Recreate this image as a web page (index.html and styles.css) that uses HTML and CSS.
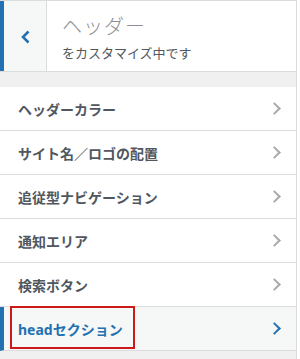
FILE: index.html
```html
<!DOCTYPE html>
<html lang="ja">
<head>
    <meta charset="utf-8" />
    <title>ヘッダー</title>
    <link rel="stylesheet" href="styles.css">
</head>
<body>

<div id="customize_panel">
    <div class="panelHeader">
        <button class="backButton" type="button">
            <svg width="12" height="14" viewBox="0 0 12 14"><path d="M8.5 1.5 L3 7 L8.5 12.5" fill="none" stroke="#2271b1" stroke-width="2.6" /></svg>
        </button>
        <div class="panelTitle">
            <h3>ヘッダー</h3>
            <p>をカスタマイズ中です</p>
        </div>
    </div>

    <ul class="sectionList">
        <li>ヘッダーカラー<span class="chevron"></span></li>
        <li>サイト名／ロゴの配置<span class="chevron"></span></li>
        <li>追従型ナビゲーション<span class="chevron"></span></li>
        <li>通知エリア<span class="chevron"></span></li>
        <li>検索ボタン<span class="chevron"></span></li>
        <li class="current">headセクション<span class="chevron"></span><span class="highlight"></span></li>
    </ul>
</div>

</body>
</html>
```

FILE: styles.css
```css
    /* Base:
    ---------------------------------------------------------------- */
    html, body, ul, h3, p {
        margin: 0;
        padding: 0;
        }
    body {
        background: #fff;
        font-family: "Noto Sans", "Noto Sans CJK JP", sans-serif;
        color: #50575e;
        }

    /* Panel:
    ---------------------------------------------------------------- */
    #customize_panel {
        width: 296px;
        height: 359px;
        background: #f0f0f1;
        border-right: 1px solid #dcdcde;
        }
    .panelHeader {
        display: flex;
        height: 70px;
        background: #fff;
        border-top: 1px solid #dcdcde;
        border-bottom: 1px solid #dcdcde;
        }
    .backButton {
        width: 47px;
        padding: 0 0 0 2px;
        background: #f6f7f7;
        border: 0;
        border-left: 4px solid #2271b1;
        border-right: 1px solid #dcdcde;
        display: flex;
        align-items: center;
        justify-content: center;
        }
    .backButton svg {
        display: block;
        margin-top: 1px;
        }
    .panelTitle {
        padding: 14px 0 0 15px;
        }
    .panelTitle h3 {
        font-size: 20px;
        font-weight: 300;
        line-height: 24px;
        color: #8c8f94;
        letter-spacing: 1px;
        }
    .panelTitle p {
        margin-top: 5px;
        font-size: 13px;
        line-height: 18px;
        color: #50575e;
        }

    /* Section list:
    ---------------------------------------------------------------- */
    .sectionList {
        list-style: none;
        margin-top: 15px;
        }
    .sectionList li {
        position: relative;
        display: flex;
        align-items: center;
        justify-content: space-between;
        height: 43px;
        padding: 0 14px 0 18px;
        background: #fff;
        border-bottom: 1px solid #dcdcde;
        font-size: 14px;
        font-weight: bold;
        color: #50575e;
        }
    .sectionList li.current {
        background: #f6f7f7;
        color: #2271b1;
        padding-left: 14px;
        border-left: 4px solid #2271b1;
        border-bottom-color: #dcdcde;
        }
    .chevron {
        width: 7px;
        height: 7px;
        margin-right: 3px;
        border-top: 2px solid #a7aaad;
        border-right: 2px solid #a7aaad;
        transform: rotate(45deg);
        }
    .current .chevron {
        border-color: #2271b1;
        }
    .highlight {
        position: absolute;
        left: 6px;
        top: -1px;
        width: 121px;
        height: 39px;
        border: 2px solid #cc1a1a;
        }
```
